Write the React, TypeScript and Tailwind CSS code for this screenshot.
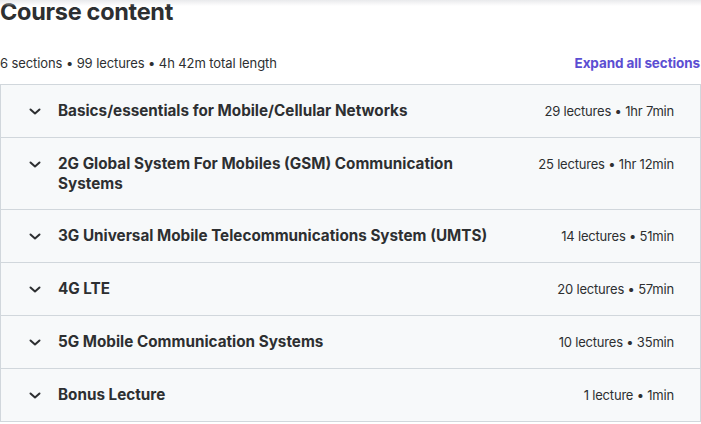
import { useState } from "react";

type Section = { title: string; lectures: string; length: string };

const sections: Section[] = [
  { title: "Basics/essentials for Mobile/Cellular Networks", lectures: "29 lectures", length: "1hr 7min" },
  { title: "2G Global System For Mobiles (GSM) Communication Systems", lectures: "25 lectures", length: "1hr 12min" },
  { title: "3G Universal Mobile Telecommunications System (UMTS)", lectures: "14 lectures", length: "51min" },
  { title: "4G LTE", lectures: "20 lectures", length: "57min" },
  { title: "5G Mobile Communication Systems", lectures: "10 lectures", length: "35min" },
  { title: "Bonus Lecture", lectures: "1 lecture", length: "1min" },
];

function Chevron() {
  return (
    <svg viewBox="0 0 20 20" className="h-5 w-5 shrink-0" fill="none" stroke="#2d2f31" strokeWidth="2" strokeLinecap="round" strokeLinejoin="round">
      <path d="M5.5 8.5 10 12.5l4.5-4" />
    </svg>
  );
}

export default function App() {
  const [open, setOpen] = useState<number | null>(null);

  return (
    <main className="relative h-[424px] w-[701px] overflow-hidden bg-white text-[#2d2f31]" style={{ fontFamily: "Inter, 'Noto Sans', sans-serif" }}>
      {/* shadow from the sticky header above */}
      <div className="pointer-events-none absolute inset-x-0 top-0 h-[6px] bg-gradient-to-b from-[#e9eaec] to-white/0" />

      <h2 className="text-[23.5px] font-bold leading-6 tracking-[-0.3px]">Course content</h2>

      <div className="mt-[29px] flex items-center justify-between">
        <p className="text-[13px] leading-5 tracking-[-0.1px]">6 sections • 99 lectures • 4h 42m total length</p>
        <button className="pr-px text-[13.5px] font-bold leading-5 tracking-[-0.1px] text-[#5b4ed2]">Expand all sections</button>
      </div>

      <ul className="mt-[11px] border border-[#d1d7dc]">
        {sections.map((s, i) => (
          <li key={s.title} className="border-t border-[#d1d7dc] bg-[#f7f9fa] first:border-t-0">
            <button
              onClick={() => setOpen(open === i ? null : i)}
              className="flex w-full items-start gap-[13px] py-4 pl-6 pr-[26px] text-left"
            >
              <span className="flex h-5 items-center">
                <Chevron />
              </span>
              <span className="flex-1 pr-6 text-[15.25px] font-bold leading-[19.5px]">{s.title}</span>
              <span className="shrink-0 text-[13px] leading-5 tracking-[-0.2px]">
                {s.lectures} • {s.length}
              </span>
            </button>
          </li>
        ))}
      </ul>
    </main>
  );
}
